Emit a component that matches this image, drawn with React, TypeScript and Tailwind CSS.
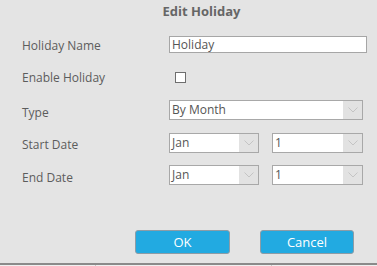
import React from "react";

const Chevron = () => (
  <svg width="10" height="6" viewBox="0 0 10 6" fill="none">
    <path d="M0.5 0.5 L5 5 L9.5 0.5" stroke="#c4c4c4" strokeWidth="1" />
  </svg>
);

const Select = ({ value, w }: { value: string; w: string }) => (
  <div className={`${w} h-[20px] flex border border-[#a8a8a8] bg-white`}>
    <div className="flex-1 pl-[2px] text-[12px] leading-[18px] text-[#555]">{value}</div>
    <div className="w-[19px] bg-[#e2e2e2] flex items-center justify-center">
      <Chevron />
    </div>
  </div>
);

export default function App() {
  return (
    <div
      className="w-[377px] h-[266px] bg-[#e4e4e4] overflow-hidden flex flex-col text-[#5c5c5c]"
      style={{ fontFamily: '"Open Sans", "Noto Sans", sans-serif' }}
    >
      <div className="h-[24px] pl-[26px] flex items-center justify-center text-[13px] font-bold text-[#666]">
        Edit Holiday
      </div>
      <div className="flex flex-col pl-[22px]">
        <div className="mt-[12px] flex items-start h-[17px]">
          <div className="w-[147px] mt-[2px] text-[12px] leading-[16px]">Holiday Name</div>
          <div className="w-[198px] h-[17px] border border-[#a6a6a6] bg-white pl-[2px] text-[12px] leading-[15px] text-[#555]">
            Holiday
          </div>
        </div>
        <div className="mt-[16px] flex items-center h-[17px]">
          <div className="w-[153px] text-[12px] leading-[16px]">Enable Holiday</div>
          <div className="w-[11px] h-[11px] border border-[#6e6e6e] bg-white" />
        </div>
        <div className="mt-[14px] flex items-start h-[19px]">
          <div className="w-[147px] mt-[5px] text-[12px] leading-[16px]">Type</div>
          <Select value="By Month" w="w-[194px]" />
        </div>
        <div className="mt-[14px] flex items-start h-[20px]">
          <div className="w-[147px] mt-[4px] text-[12px] leading-[16px]">Start Date</div>
          <Select value="Jan" w="w-[90px]" />
          <div className="w-[13px]" />
          <Select value="1" w="w-[91px]" />
        </div>
        <div className="mt-[12px] flex items-start h-[20px]">
          <div className="w-[147px] mt-[5px] text-[12px] leading-[16px]">End Date</div>
          <Select value="Jan" w="w-[90px]" />
          <div className="w-[13px]" />
          <Select value="1" w="w-[91px]" />
        </div>
      </div>
      <div className="mt-[45px] flex pl-[135px] gap-[30px]">
        <button className="w-[95px] h-[24px] rounded-[3px] border border-[#8d9ca6] bg-[#22aae1] text-white text-[13px] leading-[22px]">
          OK
        </button>
        <button className="w-[94px] h-[24px] rounded-[3px] border border-[#8d9ca6] bg-[#22aae1] text-white text-[13px] leading-[22px]">
          Cancel
        </button>
      </div>
      <div className="mt-[9px] h-[2px] bg-[#8a8a8a]" />
      <div className="flex-1 flex bg-[#f0f0f0]">
        <div className="w-[96px] border-r border-[#c8c8c8]" />
        <div className="w-[176px] border-r border-[#c8c8c8]" />
      </div>
    </div>
  );
}
